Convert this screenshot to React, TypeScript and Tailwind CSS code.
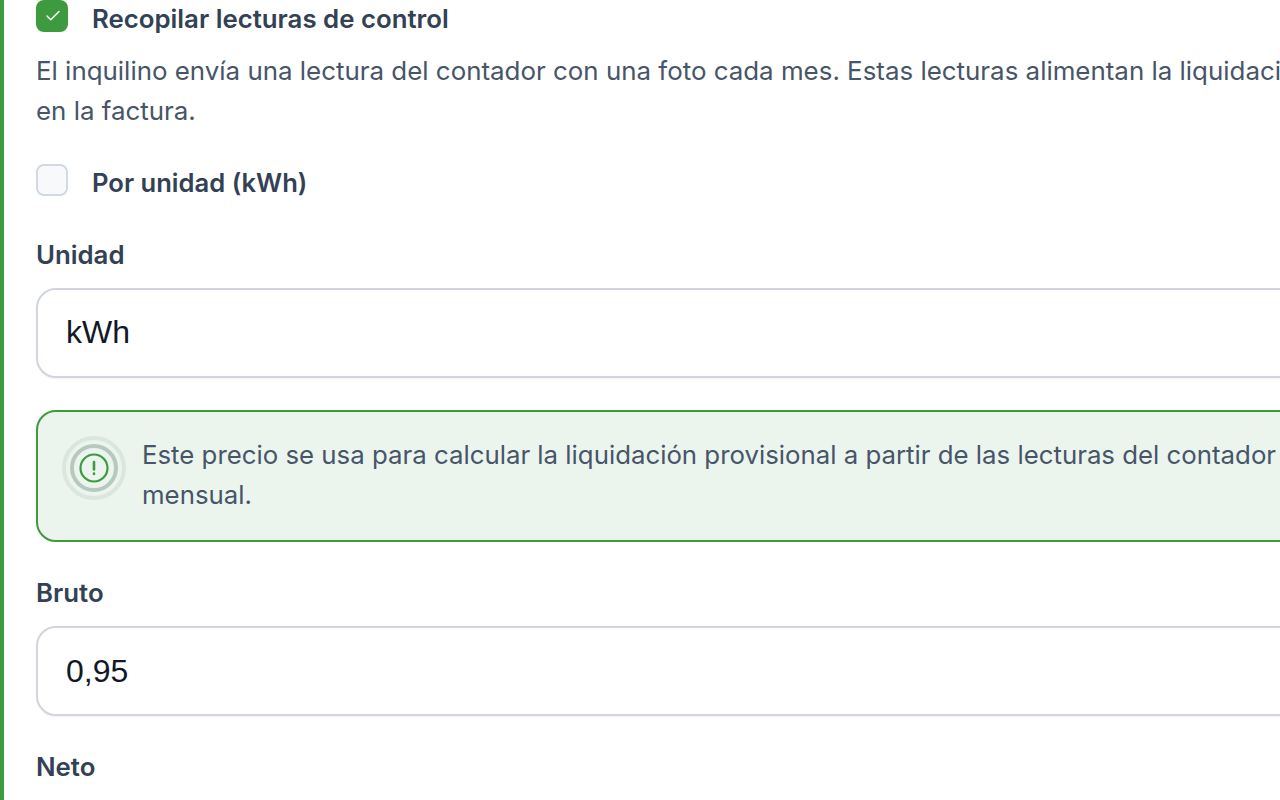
import { Check } from 'lucide-react';

function Field({ label, value, inputClass }: { label: string; value: string; inputClass?: string }) {
  return (
    <div>
      <div className="text-[25.8px] leading-[34px] font-semibold text-[#334155]">{label}</div>
      <div className="mt-[16px] h-[90px] w-[1400px] rounded-[20px] border-2 border-[#d1d5e0] bg-white pl-[28px] flex items-center font-['Liberation_Sans',sans-serif] text-[32px] text-[#111827] shadow-[0_1px_2px_rgba(16,24,40,0.05)]">
        <span className={inputClass}>{value}</span>
      </div>
    </div>
  );
}

export default function App() {
  return (
    <div className="h-[800px] w-[1280px] overflow-hidden bg-white font-['Inter',sans-serif]">
      <div className="h-[800px] border-l-4 border-[#3d9a3f] pl-[32px] w-[1500px]">
        <div className="flex items-start gap-[24px]">
          <div className="flex h-[32px] w-[32px] items-center justify-center rounded-[8px] bg-[#3d9a3f]">
            <Check className="ml-[1px] h-[18px] w-[18px] text-white" strokeWidth={2} />
          </div>
          <div className="text-[25.8px] leading-[38px] font-semibold text-[#334155]">Recopilar lecturas de control</div>
        </div>
        <p className="mt-[13px] text-[25.9px] leading-[40px] text-[#475569]">
          El inquilino envía una lectura del contador con una foto cada mes. Estas lecturas alimentan la liquidación provisional
          <br />
          en la factura.
        </p>
        <div className="mt-[33px] flex items-start gap-[24px]">
          <div className="h-[32px] w-[32px] rounded-[8px] border-2 border-[#d1d9e2] bg-[#f8f9fb]" />
          <div className="text-[25.6px] leading-[38px] font-semibold text-[#334155]">Por unidad (kWh)</div>
        </div>
        <div className="mt-[36px]">
          <Field label="Unidad" value="kWh" inputClass="-mt-[2px]" />
        </div>
        <div className="mt-[32px] flex h-[132px] w-[1400px] gap-[16px] rounded-[20px] border-2 border-[#3d9a3f] bg-[#ebf5ee] pl-[24px] pt-[24px]">
          <div className="flex h-[64px] w-[64px] shrink-0 items-center justify-center rounded-full border-[4px] border-[#dbe6df]">
            <div className="flex h-[48px] w-[48px] items-center justify-center rounded-full border-[4px] border-[#b7c9be]">
              <svg width="32" height="32" viewBox="0 0 32 32" fill="none" stroke="#3d9a3f" strokeWidth="2.2" strokeLinecap="round">
                <circle cx="16" cy="16" r="13.5" />
                <path d="M16 10v7.5M16 21.5v.5" strokeWidth="2.6" />
              </svg>
            </div>
          </div>
          <p className="-mt-px text-[25.8px] leading-[40px] text-[#475569]">
            Este precio se usa para calcular la liquidación provisional a partir de las lecturas del contador
            <br />
            mensual.
          </p>
        </div>
        <div className="mt-[34px]">
          <Field label="Bruto" value="0,95" />
        </div>
        <div className="mt-[34px] text-[25.8px] leading-[34px] font-semibold text-[#334155]">Neto</div>
      </div>
    </div>
  );
}
